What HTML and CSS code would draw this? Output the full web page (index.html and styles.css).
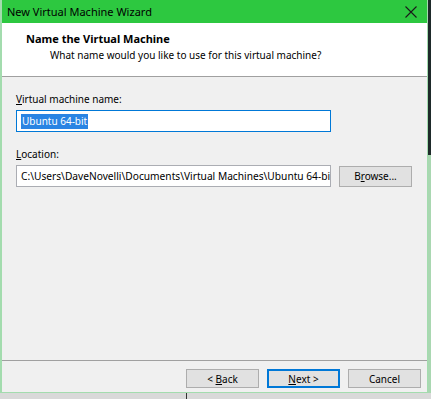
FILE: index.html
```html
<!DOCTYPE html>
<html lang="en">
<head>
    <meta charset="UTF-8">
    <title>New Virtual Machine Wizard</title>
    <link rel="stylesheet" href="styles.css">
</head>
<body>
    <div class="window">
        <div class="titlebar">
            <span class="title">New Virtual Machine Wizard</span>
            <span class="close">
                <svg width="12" height="12" viewBox="0 0 12 12"><path d="M0.5 0.5 L11.5 11.5 M11.5 0.5 L0.5 11.5" stroke="#1a1a1a" stroke-width="1.1" fill="none"/></svg>
            </span>
        </div>
        <div class="header">
            <div class="heading">Name the Virtual Machine</div>
            <div class="subheading">What name would you like to use for this virtual machine?</div>
        </div>
        <div class="content">
            <div class="label"><u>V</u>irtual machine name:</div>
            <div class="field focused"><span class="selected">Ubuntu 64-bit</span></div>
            <div class="label"><u>L</u>ocation:</div>
            <div class="row">
                <input class="field path" type="text" value="C:\Users\DaveNovelli\Documents\Virtual Machines\Ubuntu 64-bit" readonly>
                <button class="btn browse">B<u>r</u>owse...</button>
            </div>
        </div>
        <div class="footer">
            <button class="btn">&lt; <u>B</u>ack</button>
            <button class="btn default"><u>N</u>ext &gt;</button>
            <button class="btn">Cancel</button>
        </div>
    </div>
    <div class="desktop"><span class="edge"></span></div>
</body>
</html>
```

FILE: styles.css
```css
body {
    margin: 0;
    width: 431px;
    height: 399px;
    overflow: hidden;
    font-family: 'Noto Sans', sans-serif;
    font-size: 10px;
    color: #000;
    background: linear-gradient(#1e2a2a, #1e2a2a) right top / 3px 155px no-repeat, #a9d7b1;
}
.window {
    width: 428px;
    height: 393px;
    box-sizing: border-box;
    border-left: 2px solid #a3dcae;
    border-right: 1px solid #a3dcae;
    border-bottom: 1px solid #a3dcae;
    background: #f0f0f0;
    display: flex;
    flex-direction: column;
}
.titlebar {
    height: 23px;
    background: #2dc840;
    display: flex;
    align-items: center;
    justify-content: space-between;
    padding: 0 10px 0 5px;
    flex-shrink: 0;
}
.title {
    font-size: 11px;
    line-height: 23px;
}
.close {
    display: flex;
    margin-top: 1px;
}
.header {
    height: 54px;
    box-sizing: border-box;
    background: #fff;
    border-bottom: 1px solid #a0a0a0;
    padding: 8px 0 0 24px;
    flex-shrink: 0;
}
.heading {
    font-weight: bold;
    font-size: 11px;
    line-height: 16px;
}
.subheading {
    padding-left: 24px;
    line-height: 17px;
}
.content {
    flex: 1;
    padding: 14px 0 0 14px;
}
.label {
    line-height: 16px;
    margin-bottom: 3px;
}
.label + .field {
    margin-bottom: 14px;
}
.field {
    width: 315px;
    height: 22px;
    box-sizing: border-box;
    border: 1px solid #abadb3;
    background: #fff;
    padding: 0 0 0 4px;
    display: flex;
    align-items: center;
    overflow: hidden;
    white-space: nowrap;
    flex-shrink: 0;
}
.focused {
    border-color: #0078d7;
}
.selected {
    background: #2a84e3;
    color: #fff;
    padding: 0 1px;
    line-height: 15px;
}
.path {
    font-family: inherit;
    font-size: 10.2px;
    color: #000;
    outline: none;
    margin: 0;
}
.row {
    display: flex;
    align-items: center;
    gap: 8px;
}
.btn {
    width: 73px;
    height: 20px;
    box-sizing: border-box;
    border: 1px solid #adadad;
    background: #e1e1e1;
    font-family: inherit;
    font-size: 10px;
    padding: 0;
    color: #000;
}
.browse {
    height: 21px;
}
.footer {
    height: 32px;
    box-sizing: border-box;
    border-top: 1px solid #a0a0a0;
    display: flex;
    justify-content: flex-end;
    align-items: flex-start;
    gap: 8px;
    padding: 8px 6px 0 0;
    flex-shrink: 0;
}
.footer .btn {
    height: 19px;
}
.default {
    border: 2px solid #0078d7;
}
.desktop {
    height: 6px;
    background: #d9d9d9;
    position: relative;
}
.edge {
    position: absolute;
    left: 186px;
    top: 0;
    width: 1px;
    height: 6px;
    background: #333;
}
```
